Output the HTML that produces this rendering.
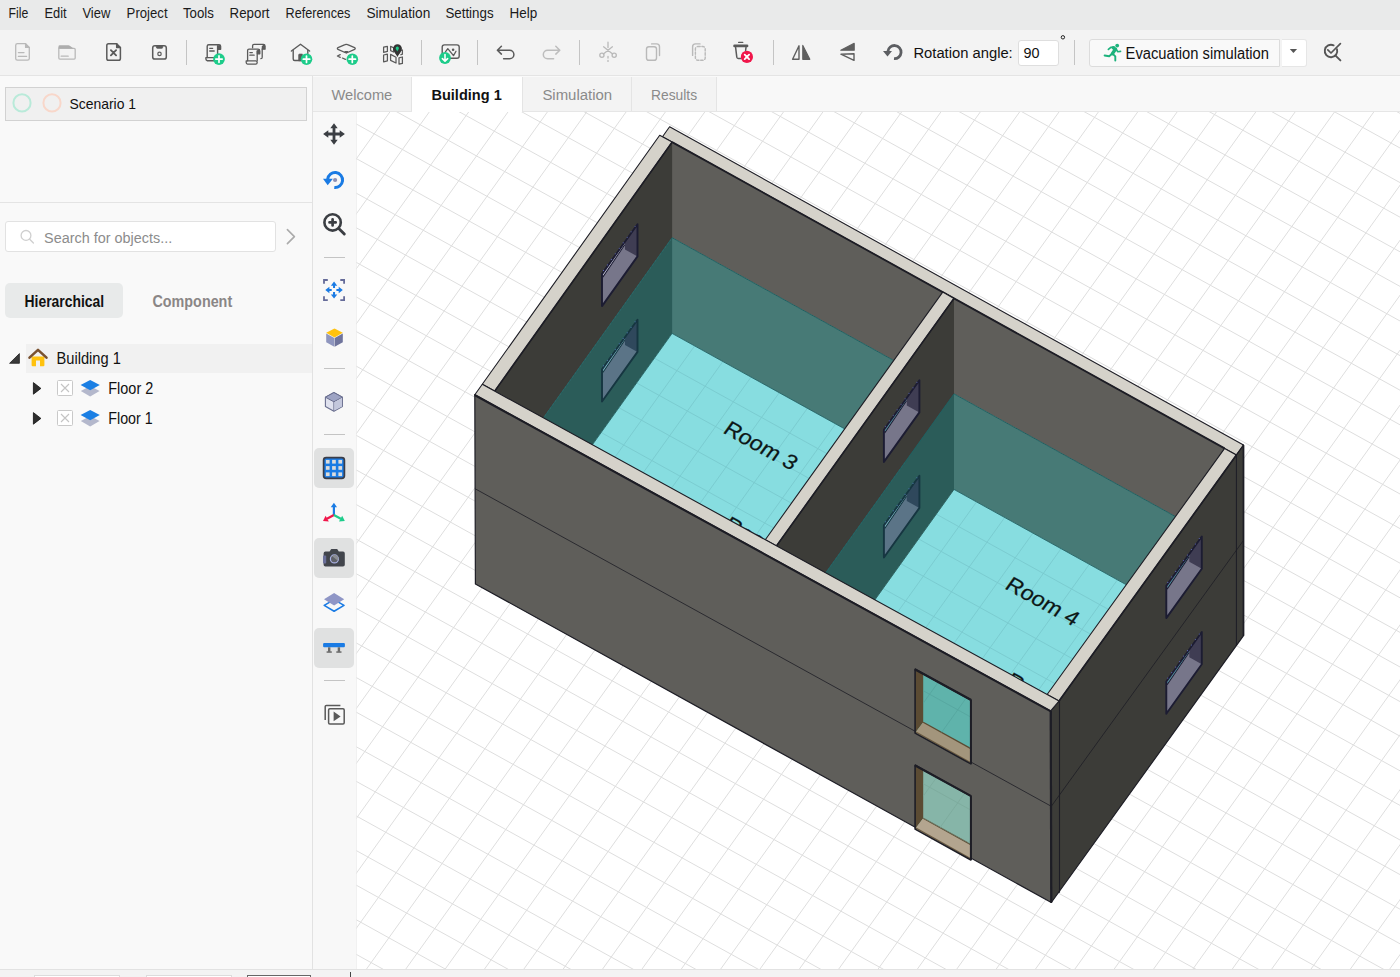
<!DOCTYPE html>
<html><head><meta charset="utf-8"><title>Building 1</title>
<style>
html,body{margin:0;padding:0;background:#f9f9f9;}
body{width:1400px;height:977px;position:relative;overflow:hidden;font-family:"Liberation Sans",sans-serif;}
.abs{position:absolute;box-sizing:border-box;}
#menubar{left:0;top:0;width:1400px;height:29.5px;background:#e9eaea;}
#toolbar{left:0;top:29.5px;width:1400px;height:46px;background:#f3f3f3;border-bottom:1px solid #e4e4e4;}
#left{left:0;top:75.5px;width:313px;height:894px;background:#f9f9f9;border-right:1px solid #e2e2e2;}
#scn{left:5px;top:87px;width:302px;height:34px;background:#f0f0f0;border:1px solid #d2d2d2;}
#hdiv{left:0;top:202px;width:312px;height:1px;background:#e4e4e4;}
#search{left:5px;top:221px;width:271px;height:31px;background:#fff;border:1px solid #e2e2e2;border-radius:3px;}
#pill{left:5px;top:283px;width:118px;height:35px;background:#e8eaea;border-radius:5px;}
#rowsel{left:26px;top:343.5px;width:286px;height:29px;background:#f1f1f1;}
#tabbar{left:313px;top:76.5px;width:1087px;height:35px;background:#f8f8f8;border-bottom:1px solid #e6e6e6;}
.tab{top:76.5px;height:34.5px;background:#f3f3f3;border-right:1px solid #e4e4e4;}
#vtb{left:313px;top:111.5px;width:43.5px;height:858px;background:#f8f8f8;border-right:1px solid #ececec;}
.vsel{left:314px;width:40px;background:#e0e1e1;border-radius:5px;}
.vsep{left:324px;width:21px;height:1px;background:#c4c4c4;}
#status{left:0;top:969px;width:1400px;height:8px;background:#f3f3f3;border-top:1px solid #e2e2e2;}
.sb{top:974.5px;height:4px;background:#fff;border:1px solid #dcdcdc;border-bottom:none;}
svg text{font-family:"Liberation Sans",sans-serif;}
</style></head><body>
<div class="abs" id="menubar"></div>
<div class="abs" id="toolbar"></div>
<div class="abs" id="left"></div>
<div class="abs" id="scn"></div>
<div class="abs" id="hdiv"></div>
<div class="abs" id="search"></div>
<div class="abs" id="pill"></div>
<div class="abs" id="rowsel"></div>
<div class="abs" id="tabbar"></div>
<div class="abs tab" style="left:313px;width:99px"></div>
<div class="abs tab" style="left:412px;width:110.5px;background:#fff;height:35.5px"></div>
<div class="abs tab" style="left:522.5px;width:109.5px"></div>
<div class="abs tab" style="left:632px;width:85px"></div>
<div class="abs" id="vtb"></div>
<div class="abs vsel" style="top:448px;height:40px"></div>
<div class="abs vsel" style="top:538px;height:40px"></div>
<div class="abs vsel" style="top:628px;height:40px"></div>
<div class="abs vsep" style="top:257px"></div>
<div class="abs vsep" style="top:368px"></div>
<div class="abs vsep" style="top:433.5px"></div>
<div class="abs vsep" style="top:680px"></div>
<div class="abs" id="status"></div>
<div class="abs sb" style="left:34px;width:86px"></div>
<div class="abs sb" style="left:146px;width:86px"></div>
<div class="abs sb" style="left:247px;width:64px;border-color:#666;top:975px"></div>
<div class="abs" style="left:350px;top:972px;width:1px;height:5px;background:#444"></div>
<!-- toolbar widgets -->
<div class="abs" style="left:186px;top:40px;width:1px;height:25px;background:#c4c4c4"></div>
<div class="abs" style="left:420.5px;top:40px;width:1px;height:25px;background:#c4c4c4"></div>
<div class="abs" style="left:476.5px;top:40px;width:1px;height:25px;background:#c4c4c4"></div>
<div class="abs" style="left:578.5px;top:40px;width:1px;height:25px;background:#c4c4c4"></div>
<div class="abs" style="left:772.5px;top:40px;width:1px;height:25px;background:#c4c4c4"></div>
<div class="abs" style="left:1074px;top:40px;width:1px;height:25px;background:#c4c4c4"></div>
<div class="abs" style="left:1018px;top:39.5px;width:41px;height:26.5px;background:#fff;border:1px solid #dedede;border-radius:3px"></div>
<div class="abs" style="left:1088.5px;top:38.5px;width:191px;height:28px;background:#f9f9f9;border:1px solid #dcdcdc;border-radius:3px 0 0 3px"></div>
<div class="abs" style="left:1281.5px;top:38.5px;width:25.5px;height:28px;background:#fff;border:1px solid #e6e6e6;border-left:none;border-radius:0 3px 3px 0"></div>
<svg class="abs" style="left:0;top:0" width="1400" height="977" viewBox="0 0 1400 977">
<defs><clipPath id="vp"><rect x="356.5" y="112" width="1043.5" height="857"/></clipPath>
<clipPath id="fl"><polygon points="672.1,333.4 942.7,483.1 765.3,730.9 494.7,581.2"/><polygon points="954.0,489.4 1224.6,639.1 1047.1,886.9 776.5,737.2"/></clipPath></defs>
<g clip-path="url(#vp)">
<rect x="356.5" y="112" width="1043.5" height="857" fill="#ffffff"/>
<path d="M391.3 110.0L354.5 161.4M430.7 110.0L354.5 216.4M470.1 110.0L354.5 271.3M509.4 110.0L354.5 326.3M548.8 110.0L354.5 381.3M588.1 110.0L354.5 436.2M627.5 110.0L354.5 491.2M666.8 110.0L354.5 546.1M706.2 110.0L354.5 601.1M745.5 110.0L354.5 656.0M784.9 110.0L354.5 711.0M824.3 110.0L354.5 765.9M863.6 110.0L354.5 820.9M903.0 110.0L354.5 875.8M942.3 110.0L354.5 930.8M981.7 110.0L365.1 971.0M1021.0 110.0L404.4 971.0M1060.4 110.0L443.8 971.0M1099.8 110.0L483.1 971.0M1139.1 110.0L522.5 971.0M1178.5 110.0L561.8 971.0M1217.8 110.0L601.2 971.0M1257.2 110.0L640.6 971.0M1296.5 110.0L679.9 971.0M1335.9 110.0L719.3 971.0M1375.2 110.0L758.6 971.0M1402.0 127.6L798.0 971.0M1402.0 182.5L837.3 971.0M1402.0 237.5L876.7 971.0M1402.0 292.5L916.0 971.0M1402.0 347.4L955.4 971.0M1402.0 402.4L994.8 971.0M1402.0 457.3L1034.1 971.0M1402.0 512.3L1073.5 971.0M1402.0 567.2L1112.8 971.0M1402.0 622.2L1152.2 971.0M1402.0 677.1L1191.5 971.0M1402.0 732.1L1230.9 971.0M1402.0 787.0L1270.3 971.0M1402.0 842.0L1309.6 971.0M1402.0 896.9L1349.0 971.0M1402.0 951.9L1388.3 971.0M1393.9 110.0L1402.0 114.5M1331.3 110.0L1402.0 149.1M1268.8 110.0L1402.0 183.7M1206.3 110.0L1402.0 218.3M1143.8 110.0L1402.0 252.9M1081.2 110.0L1402.0 287.5M1018.7 110.0L1402.0 322.1M956.2 110.0L1402.0 356.7M893.7 110.0L1402.0 391.3M831.1 110.0L1402.0 425.9M768.6 110.0L1402.0 460.5M706.1 110.0L1402.0 495.1M643.6 110.0L1402.0 529.7M581.0 110.0L1402.0 564.3M518.5 110.0L1402.0 598.9M456.0 110.0L1402.0 633.5M393.5 110.0L1402.0 668.1M354.5 123.0L1402.0 702.7M354.5 157.6L1402.0 737.3M354.5 192.2L1402.0 771.9M354.5 226.8L1402.0 806.5M354.5 261.4L1402.0 841.1M354.5 296.0L1402.0 875.7M354.5 330.6L1402.0 910.3M354.5 365.2L1402.0 944.9M354.5 399.8L1386.7 971.0M354.5 434.4L1324.1 971.0M354.5 469.0L1261.6 971.0M354.5 503.6L1199.1 971.0M354.5 538.2L1136.6 971.0M354.5 572.8L1074.0 971.0M354.5 607.4L1011.5 971.0M354.5 642.0L949.0 971.0M354.5 676.6L886.5 971.0M354.5 711.2L823.9 971.0M354.5 745.8L761.4 971.0M354.5 780.4L698.9 971.0M354.5 815.0L636.4 971.0M354.5 849.6L573.8 971.0M354.5 884.2L511.3 971.0M354.5 918.8L448.8 971.0M354.5 953.4L386.3 971.0" stroke="#dedede" stroke-width="1.0" fill="none"/>
<polygon points="669.6,126.8 1243.5,445.1 1236.4,455.0 662.5,136.8" fill="#d5d2ca" stroke="#1d1d25" stroke-width="1.1" stroke-linejoin="round"/>
<polygon points="671.0,141.4 1224.6,448.4 1224.6,543.8 671.0,237.1" fill="#5f5e5a"/>
<polygon points="671.0,237.1 1224.6,543.8 1224.6,639.1 671.0,332.8" fill="#477a76"/>
<line x1="672.1" y1="237.7" x2="1224.6" y2="543.8" stroke="#1f5f60" stroke-width="1"/>
<line x1="672.1" y1="142.1" x2="1224.6" y2="448.4" stroke="#1d1d25" stroke-width="1.8"/>
<polygon points="672.1,142.1 494.7,391.1 494.7,486.1 672.1,237.7" fill="#3c3c38"/>
<polygon points="672.1,237.7 494.7,486.1 494.7,581.2 672.1,333.4" fill="#2b5c59"/>
<line x1="672.1" y1="237.7" x2="494.7" y2="486.1" stroke="#1f5f60" stroke-width="1"/>
<polygon points="659.7,135.2 672.1,142.1 494.7,391.1 482.3,384.3" fill="#d5d2ca" stroke="#1d1d25" stroke-width="1.1" stroke-linejoin="round"/>
<line x1="672.1" y1="142.1" x2="494.7" y2="391.1" stroke="#1d1d25" stroke-width="1.6"/>
<polygon points="672.1,333.4 942.7,483.1 765.3,730.9 494.7,581.2" fill="#87dde0"/>
<polygon points="954.0,489.4 1224.6,639.1 1047.1,886.9 776.5,737.2" fill="#87dde0"/>
<path d="M391.3 110.0L354.5 161.4M430.7 110.0L354.5 216.4M470.1 110.0L354.5 271.3M509.4 110.0L354.5 326.3M548.8 110.0L354.5 381.3M588.1 110.0L354.5 436.2M627.5 110.0L354.5 491.2M666.8 110.0L354.5 546.1M706.2 110.0L354.5 601.1M745.5 110.0L354.5 656.0M784.9 110.0L354.5 711.0M824.3 110.0L354.5 765.9M863.6 110.0L354.5 820.9M903.0 110.0L354.5 875.8M942.3 110.0L354.5 930.8M981.7 110.0L365.1 971.0M1021.0 110.0L404.4 971.0M1060.4 110.0L443.8 971.0M1099.8 110.0L483.1 971.0M1139.1 110.0L522.5 971.0M1178.5 110.0L561.8 971.0M1217.8 110.0L601.2 971.0M1257.2 110.0L640.6 971.0M1296.5 110.0L679.9 971.0M1335.9 110.0L719.3 971.0M1375.2 110.0L758.6 971.0M1402.0 127.6L798.0 971.0M1402.0 182.5L837.3 971.0M1402.0 237.5L876.7 971.0M1402.0 292.5L916.0 971.0M1402.0 347.4L955.4 971.0M1402.0 402.4L994.8 971.0M1402.0 457.3L1034.1 971.0M1402.0 512.3L1073.5 971.0M1402.0 567.2L1112.8 971.0M1402.0 622.2L1152.2 971.0M1402.0 677.1L1191.5 971.0M1402.0 732.1L1230.9 971.0M1402.0 787.0L1270.3 971.0M1402.0 842.0L1309.6 971.0M1402.0 896.9L1349.0 971.0M1402.0 951.9L1388.3 971.0M1393.9 110.0L1402.0 114.5M1331.3 110.0L1402.0 149.1M1268.8 110.0L1402.0 183.7M1206.3 110.0L1402.0 218.3M1143.8 110.0L1402.0 252.9M1081.2 110.0L1402.0 287.5M1018.7 110.0L1402.0 322.1M956.2 110.0L1402.0 356.7M893.7 110.0L1402.0 391.3M831.1 110.0L1402.0 425.9M768.6 110.0L1402.0 460.5M706.1 110.0L1402.0 495.1M643.6 110.0L1402.0 529.7M581.0 110.0L1402.0 564.3M518.5 110.0L1402.0 598.9M456.0 110.0L1402.0 633.5M393.5 110.0L1402.0 668.1M354.5 123.0L1402.0 702.7M354.5 157.6L1402.0 737.3M354.5 192.2L1402.0 771.9M354.5 226.8L1402.0 806.5M354.5 261.4L1402.0 841.1M354.5 296.0L1402.0 875.7M354.5 330.6L1402.0 910.3M354.5 365.2L1402.0 944.9M354.5 399.8L1386.7 971.0M354.5 434.4L1324.1 971.0M354.5 469.0L1261.6 971.0M354.5 503.6L1199.1 971.0M354.5 538.2L1136.6 971.0M354.5 572.8L1074.0 971.0M354.5 607.4L1011.5 971.0M354.5 642.0L949.0 971.0M354.5 676.6L886.5 971.0M354.5 711.2L823.9 971.0M354.5 745.8L761.4 971.0M354.5 780.4L698.9 971.0M354.5 815.0L636.4 971.0M354.5 849.6L573.8 971.0M354.5 884.2L511.3 971.0M354.5 918.8L448.8 971.0M354.5 953.4L386.3 971.0" stroke="#79c9ce" stroke-width="0.9" fill="none" clip-path="url(#fl)"/>
<line x1="672.1" y1="333.4" x2="942.7" y2="483.1" stroke="#1f5f60" stroke-width="0.9"/>
<line x1="954.0" y1="489.4" x2="1224.6" y2="639.1" stroke="#1f5f60" stroke-width="0.9"/>
<line x1="672.1" y1="333.4" x2="494.7" y2="581.2" stroke="#1f5f60" stroke-width="0.9"/>
<line x1="954.0" y1="489.4" x2="776.5" y2="737.2" stroke="#1f5f60" stroke-width="0.9"/>
<text transform="matrix(28.186 15.597 -17.746 24.779 721.97 527.73)" font-family="Liberation Sans, sans-serif" font-size="0.705" fill="#0c1616" stroke="#0c1616" stroke-width="0.008">Room 1</text>
<text transform="matrix(28.186 15.597 -17.746 24.779 1003.83 683.70)" font-family="Liberation Sans, sans-serif" font-size="0.705" fill="#0c1616" stroke="#0c1616" stroke-width="0.008">Room 2</text>
<text transform="matrix(28.186 15.597 -17.746 24.779 721.97 432.27)" font-family="Liberation Sans, sans-serif" font-size="0.705" fill="#0c1616" stroke="#0c1616" stroke-width="0.008">Room 3</text>
<text transform="matrix(28.186 15.597 -17.746 24.779 1003.83 588.04)" font-family="Liberation Sans, sans-serif" font-size="0.705" fill="#0c1616" stroke="#0c1616" stroke-width="0.008">Room 4</text>
<polygon points="602.0,273.9 637.5,224.2 637.5,256.4 602.0,306.1" fill="#77768a"/>
<polygon points="637.5,224.2 637.5,256.4 625.0,249.4 625.0,241.7" fill="#3f3d53"/>
<line x1="602.8" y1="277.1" x2="624.7" y2="244.7" stroke="#1c1c32" stroke-width="1.1"/>
<line x1="602.8" y1="275.5" x2="624.7" y2="243.2" stroke="#c9cbe0" stroke-width="0.8"/>
<polygon points="602.0,273.9 637.5,224.2 637.5,256.4 602.0,306.1" fill="none" stroke="#1c1c32" stroke-width="1.9" stroke-linejoin="round"/>
<circle cx="603.5" cy="270.4" r="0.55" fill="#5f68b8"/>
<circle cx="607.4" cy="264.9" r="0.55" fill="#5f68b8"/>
<circle cx="611.4" cy="259.4" r="0.55" fill="#5f68b8"/>
<circle cx="615.3" cy="253.8" r="0.55" fill="#5f68b8"/>
<circle cx="619.3" cy="248.3" r="0.55" fill="#5f68b8"/>
<circle cx="623.2" cy="242.8" r="0.55" fill="#5f68b8"/>
<circle cx="627.2" cy="237.3" r="0.55" fill="#5f68b8"/>
<circle cx="631.1" cy="231.8" r="0.55" fill="#5f68b8"/>
<circle cx="635.1" cy="226.2" r="0.55" fill="#5f68b8"/>
<polygon points="602.0,369.3 637.5,319.7 637.5,351.9 602.0,401.5" fill="#5b7487"/>
<polygon points="637.5,319.7 637.5,351.9 625.0,345.0 625.0,337.2" fill="#2f485c"/>
<line x1="602.8" y1="372.5" x2="624.7" y2="340.2" stroke="#163641" stroke-width="1.1"/>
<line x1="602.8" y1="370.9" x2="624.7" y2="338.7" stroke="#7fc4cf" stroke-width="0.8"/>
<polygon points="602.0,369.3 637.5,319.7 637.5,351.9 602.0,401.5" fill="none" stroke="#163641" stroke-width="1.9" stroke-linejoin="round"/>
<circle cx="603.5" cy="365.8" r="0.55" fill="#5580c0"/>
<circle cx="607.4" cy="360.3" r="0.55" fill="#5580c0"/>
<circle cx="611.4" cy="354.8" r="0.55" fill="#5580c0"/>
<circle cx="615.3" cy="349.3" r="0.55" fill="#5580c0"/>
<circle cx="619.3" cy="343.8" r="0.55" fill="#5580c0"/>
<circle cx="623.2" cy="338.3" r="0.55" fill="#5580c0"/>
<circle cx="627.2" cy="332.8" r="0.55" fill="#5580c0"/>
<circle cx="631.1" cy="327.3" r="0.55" fill="#5580c0"/>
<circle cx="635.1" cy="321.8" r="0.55" fill="#5580c0"/>
<polygon points="954.0,298.4 776.5,545.9 776.5,641.5 954.0,393.9" fill="#3c3c38"/>
<polygon points="954.0,393.9 776.5,641.5 776.5,737.2 954.0,489.4" fill="#2b5c59"/>
<line x1="954.0" y1="393.9" x2="776.5" y2="641.5" stroke="#1f5f60" stroke-width="1"/>
<polygon points="942.7,292.1 954.0,298.4 776.5,545.9 765.3,539.7" fill="#d5d2ca" stroke="#1d1d25" stroke-width="1.1" stroke-linejoin="round"/>
<line x1="954.0" y1="298.4" x2="776.5" y2="545.9" stroke="#1d1d25" stroke-width="1.6"/>
<polygon points="883.9,429.7 919.4,380.2 919.4,412.4 883.9,461.9" fill="#77768a"/>
<polygon points="919.4,380.2 919.4,412.4 906.8,405.4 906.8,397.7" fill="#3f3d53"/>
<line x1="884.7" y1="432.9" x2="906.5" y2="400.7" stroke="#1c1c32" stroke-width="1.1"/>
<line x1="884.7" y1="431.3" x2="906.5" y2="399.2" stroke="#3d9aa8" stroke-width="0.8"/>
<polygon points="883.9,429.7 919.4,380.2 919.4,412.4 883.9,461.9" fill="none" stroke="#1c1c32" stroke-width="1.9" stroke-linejoin="round"/>
<circle cx="885.4" cy="426.3" r="0.55" fill="#5f68b8"/>
<circle cx="889.3" cy="420.7" r="0.55" fill="#5f68b8"/>
<circle cx="893.3" cy="415.2" r="0.55" fill="#5f68b8"/>
<circle cx="897.2" cy="409.7" r="0.55" fill="#5f68b8"/>
<circle cx="901.1" cy="404.2" r="0.55" fill="#5f68b8"/>
<circle cx="905.1" cy="398.7" r="0.55" fill="#5f68b8"/>
<circle cx="909.0" cy="393.2" r="0.55" fill="#5f68b8"/>
<circle cx="913.0" cy="387.7" r="0.55" fill="#5f68b8"/>
<circle cx="916.9" cy="382.2" r="0.55" fill="#5f68b8"/>
<polygon points="883.9,525.3 919.4,475.7 919.4,507.9 883.9,557.5" fill="#5b7487"/>
<polygon points="919.4,475.7 919.4,507.9 906.8,501.0 906.8,493.2" fill="#2f485c"/>
<line x1="884.7" y1="528.5" x2="906.5" y2="496.2" stroke="#163641" stroke-width="1.1"/>
<line x1="884.7" y1="526.9" x2="906.5" y2="494.7" stroke="#7fc4cf" stroke-width="0.8"/>
<polygon points="883.9,525.3 919.4,475.7 919.4,507.9 883.9,557.5" fill="none" stroke="#163641" stroke-width="1.9" stroke-linejoin="round"/>
<circle cx="885.4" cy="521.8" r="0.55" fill="#5580c0"/>
<circle cx="889.3" cy="516.3" r="0.55" fill="#5580c0"/>
<circle cx="893.3" cy="510.8" r="0.55" fill="#5580c0"/>
<circle cx="897.2" cy="505.3" r="0.55" fill="#5580c0"/>
<circle cx="901.1" cy="499.8" r="0.55" fill="#5580c0"/>
<circle cx="905.1" cy="494.3" r="0.55" fill="#5580c0"/>
<circle cx="909.0" cy="488.8" r="0.55" fill="#5580c0"/>
<circle cx="913.0" cy="483.3" r="0.55" fill="#5580c0"/>
<circle cx="916.9" cy="477.8" r="0.55" fill="#5580c0"/>
<polygon points="1243.5,445.1 1059.0,701.0 1050.7,710.9 1051.3,902.5 1243.5,635.7" fill="#3c3c38" stroke="#1d1d25" stroke-width="1.2" stroke-linejoin="round"/>
<polygon points="1224.6,448.4 1236.4,455.0 1059.0,701.0 1047.1,694.5" fill="#d5d2ca" stroke="#1d1d25" stroke-width="1.1" stroke-linejoin="round"/>
<line x1="1236.4" y1="455.0" x2="1059.0" y2="701.0" stroke="#1d1d25" stroke-width="1.6"/>
<line x1="1236.4" y1="455.0" x2="1236.4" y2="645.7" stroke="#1d1d25" stroke-width="1.0"/>
<line x1="1059.5" y1="700.3" x2="1059.5" y2="892.7" stroke="#1d1d25" stroke-width="1.1"/>
<line x1="1243.5" y1="445.1" x2="1243.5" y2="635.7" stroke="#1d1d25" stroke-width="1.6"/>
<line x1="1243.5" y1="540.4" x2="1051.3" y2="806.3" stroke="#1d1d25" stroke-width="0.8"/>
<polygon points="1166.3,585.9 1201.8,536.5 1201.8,568.7 1166.3,618.1" fill="#77768a"/>
<polygon points="1201.8,536.5 1201.8,568.7 1189.3,561.7 1189.3,553.9" fill="#3f3d53"/>
<line x1="1167.1" y1="589.1" x2="1189.0" y2="556.9" stroke="#1c1c32" stroke-width="1.1"/>
<line x1="1167.1" y1="587.5" x2="1189.0" y2="555.4" stroke="#3d9aa8" stroke-width="0.8"/>
<polygon points="1166.3,585.9 1201.8,536.5 1201.8,568.7 1166.3,618.1" fill="none" stroke="#1c1c32" stroke-width="1.9" stroke-linejoin="round"/>
<circle cx="1167.8" cy="582.4" r="0.55" fill="#5f68b8"/>
<circle cx="1171.7" cy="576.9" r="0.55" fill="#5f68b8"/>
<circle cx="1175.7" cy="571.4" r="0.55" fill="#5f68b8"/>
<circle cx="1179.6" cy="566.0" r="0.55" fill="#5f68b8"/>
<circle cx="1183.6" cy="560.5" r="0.55" fill="#5f68b8"/>
<circle cx="1187.5" cy="555.0" r="0.55" fill="#5f68b8"/>
<circle cx="1191.5" cy="549.5" r="0.55" fill="#5f68b8"/>
<circle cx="1195.4" cy="544.0" r="0.55" fill="#5f68b8"/>
<circle cx="1199.3" cy="538.5" r="0.55" fill="#5f68b8"/>
<polygon points="1166.3,681.5 1201.8,632.0 1201.8,664.2 1166.3,713.7" fill="#77768a"/>
<polygon points="1201.8,632.0 1201.8,664.2 1189.3,657.2 1189.3,649.5" fill="#3f3d53"/>
<line x1="1167.1" y1="684.7" x2="1189.0" y2="652.5" stroke="#1c1c32" stroke-width="1.1"/>
<line x1="1167.1" y1="683.1" x2="1189.0" y2="651.0" stroke="#3d9aa8" stroke-width="0.8"/>
<polygon points="1166.3,681.5 1201.8,632.0 1201.8,664.2 1166.3,713.7" fill="none" stroke="#1c1c32" stroke-width="1.9" stroke-linejoin="round"/>
<circle cx="1167.8" cy="678.1" r="0.55" fill="#5f68b8"/>
<circle cx="1171.7" cy="672.6" r="0.55" fill="#5f68b8"/>
<circle cx="1175.7" cy="667.1" r="0.55" fill="#5f68b8"/>
<circle cx="1179.6" cy="661.6" r="0.55" fill="#5f68b8"/>
<circle cx="1183.6" cy="656.1" r="0.55" fill="#5f68b8"/>
<circle cx="1187.5" cy="650.6" r="0.55" fill="#5f68b8"/>
<circle cx="1191.5" cy="645.0" r="0.55" fill="#5f68b8"/>
<circle cx="1195.4" cy="639.5" r="0.55" fill="#5f68b8"/>
<circle cx="1199.3" cy="634.0" r="0.55" fill="#5f68b8"/>
<polygon points="474.8,394.7 1050.7,710.9 1051.3,902.5 475.4,583.9" fill="#5f5e5a" stroke="#1d1d25" stroke-width="1.2" stroke-linejoin="round"/>
<polygon points="482.3,384.3 1059.0,701.0 1050.7,710.9 474.8,394.7" fill="#d5d2ca" stroke="#1d1d25" stroke-width="1.1" stroke-linejoin="round"/>
<line x1="474.6" y1="395.0" x2="1050.4" y2="711.2" stroke="#1d1d25" stroke-width="2.1"/>
<line x1="1050.7" y1="710.9" x2="1051.3" y2="902.5" stroke="#1d1d25" stroke-width="2.2"/>
<line x1="475.4" y1="488.9" x2="1051.3" y2="806.3" stroke="#1d1d25" stroke-width="0.8"/>
<polygon points="915.1,669.2 970.9,700.0 970.9,763.9 915.1,733.1" fill="#5fb3ab"/>
<polygon points="915.1,669.2 923.2,673.7 923.2,722.2 915.1,733.1" fill="#5b4b33"/>
<polygon points="915.1,733.1 923.2,722.2 970.9,748.6 970.9,763.9" fill="#a3957c"/>
<line x1="923.2" y1="722.2" x2="970.9" y2="748.6" stroke="#5b4b33" stroke-width="1.3"/>
<line x1="915.9" y1="731.9" x2="970.9" y2="762.7" stroke="#6a5a40" stroke-width="1.2"/>
<clipPath id="dg1"><polygon points="923.2,673.7 970.9,700.0 970.9,748.6 923.2,722.2"/></clipPath>
<g clip-path="url(#dg1)"><g transform="translate(0 -93.0)"><path d="M391.3 110.0L354.5 161.4M430.7 110.0L354.5 216.4M470.1 110.0L354.5 271.3M509.4 110.0L354.5 326.3M548.8 110.0L354.5 381.3M588.1 110.0L354.5 436.2M627.5 110.0L354.5 491.2M666.8 110.0L354.5 546.1M706.2 110.0L354.5 601.1M745.5 110.0L354.5 656.0M784.9 110.0L354.5 711.0M824.3 110.0L354.5 765.9M863.6 110.0L354.5 820.9M903.0 110.0L354.5 875.8M942.3 110.0L354.5 930.8M981.7 110.0L365.1 971.0M1021.0 110.0L404.4 971.0M1060.4 110.0L443.8 971.0M1099.8 110.0L483.1 971.0M1139.1 110.0L522.5 971.0M1178.5 110.0L561.8 971.0M1217.8 110.0L601.2 971.0M1257.2 110.0L640.6 971.0M1296.5 110.0L679.9 971.0M1335.9 110.0L719.3 971.0M1375.2 110.0L758.6 971.0M1402.0 127.6L798.0 971.0M1402.0 182.5L837.3 971.0M1402.0 237.5L876.7 971.0M1402.0 292.5L916.0 971.0M1402.0 347.4L955.4 971.0M1402.0 402.4L994.8 971.0M1402.0 457.3L1034.1 971.0M1402.0 512.3L1073.5 971.0M1402.0 567.2L1112.8 971.0M1402.0 622.2L1152.2 971.0M1402.0 677.1L1191.5 971.0M1402.0 732.1L1230.9 971.0M1402.0 787.0L1270.3 971.0M1402.0 842.0L1309.6 971.0M1402.0 896.9L1349.0 971.0M1402.0 951.9L1388.3 971.0M1393.9 110.0L1402.0 114.5M1331.3 110.0L1402.0 149.1M1268.8 110.0L1402.0 183.7M1206.3 110.0L1402.0 218.3M1143.8 110.0L1402.0 252.9M1081.2 110.0L1402.0 287.5M1018.7 110.0L1402.0 322.1M956.2 110.0L1402.0 356.7M893.7 110.0L1402.0 391.3M831.1 110.0L1402.0 425.9M768.6 110.0L1402.0 460.5M706.1 110.0L1402.0 495.1M643.6 110.0L1402.0 529.7M581.0 110.0L1402.0 564.3M518.5 110.0L1402.0 598.9M456.0 110.0L1402.0 633.5M393.5 110.0L1402.0 668.1M354.5 123.0L1402.0 702.7M354.5 157.6L1402.0 737.3M354.5 192.2L1402.0 771.9M354.5 226.8L1402.0 806.5M354.5 261.4L1402.0 841.1M354.5 296.0L1402.0 875.7M354.5 330.6L1402.0 910.3M354.5 365.2L1402.0 944.9M354.5 399.8L1386.7 971.0M354.5 434.4L1324.1 971.0M354.5 469.0L1261.6 971.0M354.5 503.6L1199.1 971.0M354.5 538.2L1136.6 971.0M354.5 572.8L1074.0 971.0M354.5 607.4L1011.5 971.0M354.5 642.0L949.0 971.0M354.5 676.6L886.5 971.0M354.5 711.2L823.9 971.0M354.5 745.8L761.4 971.0M354.5 780.4L698.9 971.0M354.5 815.0L636.4 971.0M354.5 849.6L573.8 971.0M354.5 884.2L511.3 971.0M354.5 918.8L448.8 971.0M354.5 953.4L386.3 971.0" stroke="#55a59e" stroke-width="0.8" fill="none"/></g></g>
<polygon points="915.1,669.2 970.9,700.0 970.9,763.9 915.1,733.1" fill="none" stroke="#1d1d25" stroke-width="1.6" stroke-linejoin="round"/>
<line x1="914.8" y1="669.2" x2="971.2" y2="700.0" stroke="#1d1d25" stroke-width="2.2"/>
<line x1="970.9" y1="700.0" x2="970.9" y2="763.9" stroke="#1d1d25" stroke-width="2.0"/>
<polygon points="915.1,765.2 970.9,796.1 970.9,860.0 915.1,829.1" fill="#86b5a8"/>
<polygon points="915.1,765.2 923.2,769.7 923.2,818.2 915.1,829.1" fill="#5b4b33"/>
<polygon points="915.1,829.1 923.2,818.2 970.9,844.6 970.9,860.0" fill="#b3a58f"/>
<line x1="923.2" y1="818.2" x2="970.9" y2="844.6" stroke="#5b4b33" stroke-width="1.3"/>
<line x1="915.9" y1="827.9" x2="970.9" y2="858.8" stroke="#6a5a40" stroke-width="1.2"/>
<clipPath id="dg0"><polygon points="923.2,769.7 970.9,796.1 970.9,844.6 923.2,818.2"/></clipPath>
<g clip-path="url(#dg0)"><g transform="translate(0 0.0)"><path d="M391.3 110.0L354.5 161.4M430.7 110.0L354.5 216.4M470.1 110.0L354.5 271.3M509.4 110.0L354.5 326.3M548.8 110.0L354.5 381.3M588.1 110.0L354.5 436.2M627.5 110.0L354.5 491.2M666.8 110.0L354.5 546.1M706.2 110.0L354.5 601.1M745.5 110.0L354.5 656.0M784.9 110.0L354.5 711.0M824.3 110.0L354.5 765.9M863.6 110.0L354.5 820.9M903.0 110.0L354.5 875.8M942.3 110.0L354.5 930.8M981.7 110.0L365.1 971.0M1021.0 110.0L404.4 971.0M1060.4 110.0L443.8 971.0M1099.8 110.0L483.1 971.0M1139.1 110.0L522.5 971.0M1178.5 110.0L561.8 971.0M1217.8 110.0L601.2 971.0M1257.2 110.0L640.6 971.0M1296.5 110.0L679.9 971.0M1335.9 110.0L719.3 971.0M1375.2 110.0L758.6 971.0M1402.0 127.6L798.0 971.0M1402.0 182.5L837.3 971.0M1402.0 237.5L876.7 971.0M1402.0 292.5L916.0 971.0M1402.0 347.4L955.4 971.0M1402.0 402.4L994.8 971.0M1402.0 457.3L1034.1 971.0M1402.0 512.3L1073.5 971.0M1402.0 567.2L1112.8 971.0M1402.0 622.2L1152.2 971.0M1402.0 677.1L1191.5 971.0M1402.0 732.1L1230.9 971.0M1402.0 787.0L1270.3 971.0M1402.0 842.0L1309.6 971.0M1402.0 896.9L1349.0 971.0M1402.0 951.9L1388.3 971.0M1393.9 110.0L1402.0 114.5M1331.3 110.0L1402.0 149.1M1268.8 110.0L1402.0 183.7M1206.3 110.0L1402.0 218.3M1143.8 110.0L1402.0 252.9M1081.2 110.0L1402.0 287.5M1018.7 110.0L1402.0 322.1M956.2 110.0L1402.0 356.7M893.7 110.0L1402.0 391.3M831.1 110.0L1402.0 425.9M768.6 110.0L1402.0 460.5M706.1 110.0L1402.0 495.1M643.6 110.0L1402.0 529.7M581.0 110.0L1402.0 564.3M518.5 110.0L1402.0 598.9M456.0 110.0L1402.0 633.5M393.5 110.0L1402.0 668.1M354.5 123.0L1402.0 702.7M354.5 157.6L1402.0 737.3M354.5 192.2L1402.0 771.9M354.5 226.8L1402.0 806.5M354.5 261.4L1402.0 841.1M354.5 296.0L1402.0 875.7M354.5 330.6L1402.0 910.3M354.5 365.2L1402.0 944.9M354.5 399.8L1386.7 971.0M354.5 434.4L1324.1 971.0M354.5 469.0L1261.6 971.0M354.5 503.6L1199.1 971.0M354.5 538.2L1136.6 971.0M354.5 572.8L1074.0 971.0M354.5 607.4L1011.5 971.0M354.5 642.0L949.0 971.0M354.5 676.6L886.5 971.0M354.5 711.2L823.9 971.0M354.5 745.8L761.4 971.0M354.5 780.4L698.9 971.0M354.5 815.0L636.4 971.0M354.5 849.6L573.8 971.0M354.5 884.2L511.3 971.0M354.5 918.8L448.8 971.0M354.5 953.4L386.3 971.0" stroke="#7ca99c" stroke-width="0.8" fill="none"/></g></g>
<polygon points="915.1,765.2 970.9,796.1 970.9,860.0 915.1,829.1" fill="none" stroke="#1d1d25" stroke-width="1.6" stroke-linejoin="round"/>
<line x1="914.8" y1="765.2" x2="971.2" y2="796.1" stroke="#1d1d25" stroke-width="2.2"/>
<line x1="970.9" y1="796.1" x2="970.9" y2="860.0" stroke="#1d1d25" stroke-width="2.0"/>
</g>
<g id="uitext">
<text transform="translate(8.60 18.20) scale(0.8471 1)" font-size="14.5" fill="#1b1b1b">File</text>
<text transform="translate(44.40 18.20) scale(0.8880 1)" font-size="14.5" fill="#1b1b1b">Edit</text>
<text transform="translate(82.40 18.20) scale(0.8988 1)" font-size="14.5" fill="#1b1b1b">View</text>
<text transform="translate(126.60 18.20) scale(0.9086 1)" font-size="14.5" fill="#1b1b1b">Project</text>
<text transform="translate(183.00 18.20) scale(0.9151 1)" font-size="14.5" fill="#1b1b1b">Tools</text>
<text transform="translate(229.60 18.20) scale(0.9195 1)" font-size="14.5" fill="#1b1b1b">Report</text>
<text transform="translate(285.60 18.20) scale(0.8742 1)" font-size="14.5" fill="#1b1b1b">References</text>
<text transform="translate(366.40 18.20) scale(0.9446 1)" font-size="14.5" fill="#1b1b1b">Simulation</text>
<text transform="translate(445.40 18.20) scale(0.9203 1)" font-size="14.5" fill="#1b1b1b">Settings</text>
<text transform="translate(509.60 18.20) scale(0.9305 1)" font-size="14.5" fill="#1b1b1b">Help</text>
<text transform="translate(69.40 108.60) scale(0.9296 1)" font-size="15" fill="#111">Scenario 1</text>
<text transform="translate(331.50 100.00) scale(0.9581 1)" font-size="15.3" fill="#8a8a8a">Welcome</text>
<text transform="translate(431.40 100.00) scale(0.9519 1)" font-size="15.3" fill="#111" font-weight="bold">Building 1</text>
<text transform="translate(542.40 100.00) scale(0.9768 1)" font-size="15.3" fill="#8a8a8a">Simulation</text>
<text transform="translate(651.00 100.00) scale(0.9042 1)" font-size="15.3" fill="#8a8a8a">Results</text>
<text transform="translate(44.10 243.00) scale(0.9423 1)" font-size="15.3" fill="#8c8c8c">Search for objects...</text>
<text transform="translate(24.50 306.60) scale(0.8821 1)" font-size="15.8" fill="#111" font-weight="bold">Hierarchical</text>
<text transform="translate(152.50 306.60) scale(0.9086 1)" font-size="15.8" fill="#8a8686" font-weight="bold">Component</text>
<text transform="translate(56.50 364.30) scale(0.9288 1)" font-size="15.8" fill="#111">Building 1</text>
<text transform="translate(108.30 394.00) scale(0.9143 1)" font-size="15.8" fill="#111">Floor 2</text>
<text transform="translate(108.30 423.80) scale(0.9041 1)" font-size="15.8" fill="#111">Floor 1</text>
<text transform="translate(913.40 57.60) scale(0.9596 1)" font-size="15.4" fill="#111">Rotation angle:</text>
<text transform="translate(1023.40 58.20) scale(0.9343 1)" font-size="15.4" fill="#111">90</text>
<text transform="translate(1125.60 59.00) scale(0.9331 1)" font-size="15.8" fill="#111">Evacuation simulation</text>
</g>
<g id="icons">
<!-- toolbar icons -->
<g fill="none" stroke="#b9b9b9" stroke-width="1.3" stroke-linejoin="round" stroke-linecap="round">
 <!-- new file -->
 <path d="M17.4 43.7H25.6L29.3 47.4V58.4Q29.3 60.2 27.5 60.2H17.4Q15.7 60.2 15.7 58.4V45.5Q15.7 43.7 17.4 43.7Z"/>
 <path d="M25.6 43.7V47.4H29.3" fill="#b9b9b9"/>
 <path d="M18.4 52.6H24M18.4 56.4H26.6"/>
 <!-- folder -->
 <path d="M58.8 48V58.1Q58.8 59.2 59.9 59.2H74.1Q75.2 59.2 75.2 58.1V49.4Q75.2 48.3 74.1 48.3H58.8Z"/>
 <path d="M58.5 48.5V46.6Q58.5 45.3 59.8 45.3H68.6Q69.3 45.3 69.8 45.7L73.6 48.5Z" fill="#adadad" stroke="none"/>
 <path d="M61.2 56.2H68.2"/>
</g>
<g fill="none" stroke="#5a5a5a" stroke-width="1.5" stroke-linejoin="round" stroke-linecap="round">
 <!-- close file -->
 <path d="M108.5 43.8H116.7L120.4 47.5V58.4Q120.4 60.2 118.6 60.2H108.5Q106.8 60.2 106.8 58.4V45.6Q106.8 43.8 108.5 43.8Z"/>
 <path d="M116.7 43.8V47.5H120.4" fill="#5a5a5a"/>
 <path d="M110.9 50.1L116.1 55.3M116.1 50.1L110.9 55.3" stroke-width="1.8"/>
 <!-- save -->
 <rect x="152.7" y="45.7" width="13.6" height="13.4" rx="2.2"/>
 <path d="M156.4 45.6H162.6V47.6Q162.6 48.3 161.9 48.3H157.1Q156.4 48.3 156.4 47.6Z" fill="#5a5a5a" stroke-width="0.8"/>
 <circle cx="159.5" cy="53.9" r="1.7" stroke-width="1.2"/>
</g>
<!-- scenario add -->
<g fill="none" stroke="#5a5a5a" stroke-width="1.4" stroke-linejoin="round" stroke-linecap="round">
 <path d="M207.2 57.6V46.2Q207.2 44.7 208.7 44.7H219Q220.6 44.7 220.6 46.3V49.3H217.8V46.3"/>
 <path d="M217.6 46V57.6" />
 <path d="M219.2 44.7Q220.7 44.9 220.7 46.5V49.3H218V46.3Q218 44.9 219.2 44.7Z" fill="#5a5a5a" stroke="none"/>
 <path d="M205.9 57.6H216Q217.6 57.8 217.6 59.3Q217.4 60.7 216 60.7H207.3Q205.9 60.5 205.9 59.1Z"/>
 <path d="M209.7 48.3H212.7" stroke-width="1.2"/><path d="M209.7 51H214.2" stroke-width="1.3"/>
</g>
<circle cx="219" cy="59.1" r="5.9" fill="#1dcc8a"/><path d="M219 55.9V62.3M215.8 59.1H222.2" stroke="#fff" stroke-width="1.7" stroke-linecap="round"/>
<!-- copy scenario -->
<g fill="none" stroke="#5a5a5a" stroke-width="1.3" stroke-linejoin="round" stroke-linecap="round">
 <path d="M252.6 47.8V45.8Q252.6 44.4 254 44.4H263.4Q265 44.4 265 46V49.2H262.4V46.4"/>
 <path d="M263.8 44.4Q265.2 44.6 265.2 46.2V49.2H262.4V46.4Q262.4 44.6 263.8 44.4Z" fill="#5a5a5a" stroke="none"/>
 <path d="M262.2 49V57.2Q262.2 58.7 260.9 58.7"/>
 <path d="M247.6 60.8V50.6Q247.6 49.2 249 49.2H258Q259.8 49.2 259.8 51V53.8H257.4V51"/>
 <path d="M258.6 49.2Q260 49.4 260 51V53.8H257.3V51Q257.3 49.4 258.6 49.2Z" fill="#5a5a5a" stroke="none"/>
 <path d="M257.2 51V60.8"/>
 <path d="M246.2 60.9H255.8Q257.2 61.1 257.2 62.6Q257 64.1 255.8 64.1H247.6Q246.2 63.9 246.2 62.5Z"/>
 <path d="M249.8 52.6H252.4" stroke-width="1.1"/><path d="M249.8 55.2H254.2" stroke-width="1.2"/>
</g>
<!-- home add -->
<g fill="none" stroke="#5a5a5a" stroke-width="1.4" stroke-linejoin="round" stroke-linecap="round">
 <path d="M291.4 51L300.5 44.3L309.6 51"/>
 <path d="M293.2 50.4V59Q293.2 60.5 294.7 60.5H301"/><path d="M307.8 50.4V53.4"/>
 <path d="M298.6 60.5V55Q298.6 54 299.6 54H302.4V60.5Z" fill="#5a5a5a" stroke-width="0.6"/>
</g>
<circle cx="306.5" cy="59.2" r="5.8" fill="#1dcc8a"/><path d="M306.5 56V62.4M303.3 59.2H309.7" stroke="#fff" stroke-width="1.7" stroke-linecap="round"/>
<!-- floor add -->
<g fill="none" stroke="#5a5a5a" stroke-width="1.3" stroke-linejoin="round" stroke-linecap="round">
 <path d="M345 44.6Q346.3 44 347.6 44.6L354.6 47.6Q355.9 48.5 354.6 49.4L347.6 52.5Q346.3 53.1 345 52.5L338 49.4Q336.7 48.5 338 47.6Z"/>
 <path d="M345 51.6H347.6L346.3 52.8Z" fill="#5a5a5a"/>
 <path d="M340.2 54.6L337.4 56L340.2 57.4" stroke-width="1.2"/><path d="M342.4 58L345.4 59.4" stroke-width="1.2"/>
</g>
<circle cx="352.3" cy="59.2" r="5.8" fill="#1dcc8a"/><path d="M352.3 56V62.4M349.1 59.2H355.5" stroke="#fff" stroke-width="1.7" stroke-linecap="round"/>
<!-- map pin -->
<g fill="none" stroke="#5a5a5a" stroke-width="1.25" stroke-linejoin="round">
 <path d="M383.6 47.2L387.4 46.3V51.4L383.6 52.3Z"/><path d="M383.6 55L387.4 54.1V60.8L383.6 61.8Z"/>
 <path d="M390.6 46.4L393.6 47.8V52L390.6 50.6Z"/><path d="M390.6 54.4L396 57.2V63L390.6 60.4Z"/>
 <path d="M399 57.8L402.4 57V63.4L399 64.2Z"/><path d="M400.6 50.4L402.4 50V54.2L400.4 54.8"/>
</g>
<path d="M397.5 44.2A4.4 4.4 0 0 1 401.9 48.6C401.9 51.6 398.6 54.6 397.5 57C396.4 54.6 393.1 51.6 393.1 48.6A4.4 4.4 0 0 1 397.5 44.2Z" fill="#333"/>
<path d="M397.3 46.6A1.6 1.6 0 0 1 398.9 48.2C398.9 49.3 397.8 50.2 397.3 51.4C396.8 50.2 395.7 49.3 395.7 48.2A1.6 1.6 0 0 1 397.3 46.6Z" fill="#1dcc8a"/>
<!-- image import -->
<g fill="none" stroke="#5a5a5a" stroke-width="1.4" stroke-linejoin="round" stroke-linecap="round">
 <rect x="442.2" y="44.9" width="17" height="13.4" rx="2.2"/>
 <path d="M445.4 51.8L447.8 48.7L453.5 55.6L456 51.2" stroke-width="1.3"/>
 <circle cx="453.1" cy="49.8" r="0.6" fill="#5a5a5a"/>
</g>
<circle cx="445" cy="58" r="5.9" fill="#1dcc8a"/><path d="M445 54.6V61M442.4 58.6L445 61.2L447.6 58.6" fill="none" stroke="#fff" stroke-width="1.6" stroke-linecap="round" stroke-linejoin="round"/>
<!-- undo / redo -->
<path d="M501.4 46.3L497.4 50.2L501.4 54.1M497.6 50.2H509.6A4.3 4.3 0 0 1 509.6 58.8H503.6" fill="none" stroke="#5a5a5a" stroke-width="1.5" stroke-linecap="round" stroke-linejoin="round"/>
<path d="M555.8 46.3L559.8 50.2L555.8 54.1M559.6 50.2H547.6A4.3 4.3 0 0 0 547.6 58.8H553.6" fill="none" stroke="#bdbdbd" stroke-width="1.5" stroke-linecap="round" stroke-linejoin="round"/>
<!-- cut -->
<g fill="none" stroke="#b9b9b9" stroke-width="1.3" stroke-linecap="round">
 <path d="M608 42.2V47.6M608 56.4V58M608 60.4V61.4"/>
 <path d="M603.6 46.8L612.6 54M612.4 46.8L603.4 54"/>
 <circle cx="601.9" cy="55.2" r="2.1"/><circle cx="614.2" cy="55.2" r="2.1"/>
</g>
<!-- copy -->
<g fill="none" stroke="#b9b9b9" stroke-width="1.4" stroke-linecap="round" stroke-linejoin="round">
 <rect x="646.5" y="46.7" width="10" height="13.6" rx="2.4"/>
 <path d="M651.6 43.9H656.6Q659.5 43.9 659.5 46.8V55.6"/>
</g>
<!-- paste -->
<g fill="none" stroke="#b9b9b9" stroke-width="1.4" stroke-linecap="round" stroke-linejoin="round">
 <rect x="695.4" y="46.5" width="9.8" height="13.8" rx="2.4" stroke-dasharray="2.4 1.7"/>
 <path d="M692.6 55.4V46.8Q692.6 43.9 695.5 43.9H700"/>
</g>
<!-- delete -->
<g fill="none" stroke="#5a5a5a" stroke-linecap="round" stroke-linejoin="round">
 <path d="M738.6 42.4H742.8" stroke-width="1.2"/>
 <path d="M734.6 45.9H747" stroke-width="2.8"/>
 <path d="M735.6 47.4L736.8 57.2Q737 58.4 738.2 58.4H741" stroke-width="1.5"/><path d="M746 47.4L745.6 50.4" stroke-width="1.5"/>
</g>
<circle cx="746.9" cy="56.9" r="6.1" fill="#f0164a"/><path d="M744.7 54.7L749.1 59.1M749.1 54.7L744.7 59.1" stroke="#fff" stroke-width="1.8" stroke-linecap="round"/>
<!-- mirror h / v -->
<path d="M799 45.8V59.2H792.6Z" fill="none" stroke="#5f5f5f" stroke-width="1.4" stroke-linejoin="round"/>
<path d="M802.8 45.4L809.8 59.3H802.8Z" fill="#5f5f5f" stroke="#5f5f5f" stroke-width="1.2" stroke-linejoin="round"/>
<path d="M854.2 43.4V50.2H840.8Z" fill="#5f5f5f" stroke="#5f5f5f" stroke-width="1.2" stroke-linejoin="round"/>
<path d="M854 53.8V60.4L840.9 54.2Z" fill="none" stroke="#5f5f5f" stroke-width="1.4" stroke-linejoin="round"/>
<!-- rotate ccw -->
<path d="M894 58.7A6.6 6.6 0 1 0 887.9 51.5" fill="none" stroke="#5c5e62" stroke-width="2.8"/>
<path d="M883 50.9H892L887.5 56.6Z" fill="#5c5e62"/>
<!-- degree -->
<circle cx="1062.9" cy="37.3" r="1.7" fill="none" stroke="#222" stroke-width="1"/>
<!-- runner -->
<g fill="none" stroke="#1cb27c" stroke-linecap="round" stroke-linejoin="round">
 <circle cx="1117.2" cy="45.6" r="1.9" fill="#1cb27c" stroke="none"/>
 <path d="M1113.4 47.9L1115.4 49.2L1112.4 53.6" stroke-width="3.4"/>
 <path d="M1108.4 49.4L1110.8 47.4L1114.2 47.2" stroke-width="1.7"/>
 <path d="M1116 48.6L1117.6 51.7L1120.6 51.4" stroke-width="1.6"/>
 <path d="M1111.8 54L1109.2 56.3L1104.6 55.5" stroke-width="1.9"/>
 <path d="M1112.8 53.8L1115.3 56.4V60.6" stroke-width="1.9"/>
</g>
<!-- dropdown arrow -->
<path d="M1289.8 49.1H1297.1L1293.45 52.9Z" fill="#555"/>
<!-- check search -->
<g fill="none" stroke="#555" stroke-width="1.9" stroke-linecap="round" stroke-linejoin="round">
 <path d="M1333.6 45.3A6.25 6.25 0 1 0 1337 49.2"/>
 <path d="M1327.8 49.9L1331 53L1340.4 43.6" stroke-width="1.7"/>
 <path d="M1335.8 55.8L1340.4 60.4"/>
</g>

<!-- left panel icons -->
<circle cx="22" cy="102.9" r="8.6" fill="none" stroke="#b9ead9" stroke-width="2"/>
<circle cx="52" cy="102.9" r="8.6" fill="none" stroke="#f8d7ca" stroke-width="2"/>
<g fill="none" stroke="#cfcfcf" stroke-width="1.3" stroke-linecap="round"><circle cx="26" cy="235.4" r="4.9"/><path d="M29.7 239.2L33.4 243"/></g>
<path d="M287.4 229.6L294.4 236.6L287.4 243.6" fill="none" stroke="#ababab" stroke-width="1.6" stroke-linecap="round" stroke-linejoin="round"/>
<!-- tree -->
<path d="M19.4 353.6V363.3H9.6Z" fill="#3a3a3a" stroke="#222" stroke-width="0.8" stroke-linejoin="round"/>
<path d="M33.4 382.6L40.9 388.4L33.4 394.2Z" fill="#2e2e2e" stroke="#111" stroke-width="0.8" stroke-linejoin="round"/>
<path d="M33.4 412.6L40.9 418.4L33.4 424.2Z" fill="#2e2e2e" stroke="#111" stroke-width="0.8" stroke-linejoin="round"/>
<!-- house -->
<path d="M31.6 356.6H44.4V365.2Q44.4 366.3 43.3 366.3H40V360.6H36V366.3H32.7Q31.6 366.3 31.6 365.2Z" fill="#ffc20e"/>
<path d="M29.5 357.6L38 349.9L46.5 357.6" fill="none" stroke="#7a5230" stroke-width="2.6" stroke-linecap="round" stroke-linejoin="round"/>
<!-- checkboxes -->
<g fill="#fff" stroke="#c9c9c9" stroke-width="1"><rect x="57.5" y="380.5" width="15" height="15" rx="1"/><rect x="57.5" y="410.5" width="15" height="15" rx="1"/></g>
<path d="M61 384L69 392M69 384L61 392M61 414L69 422M69 414L61 422" stroke="#c4c4c4" stroke-width="1.1" fill="none"/>
<!-- layers icon -->
<g id="lay"><path d="M90.2 386L99.6 391L90.2 396.4L80.8 391Z" fill="#b4b8cc"/><path d="M90.2 380L99.8 385L90.2 390.2L80.6 385Z" fill="#1a7fe4"/></g>
<use href="#lay" y="30"/>
<!-- vertical toolbar icons -->
<!-- move -->
<g fill="#3b3e43" stroke="none">
 <path d="M334 123.2L337.7 128.3H335.4V132.6H339.7V130.3L344.9 134L339.7 137.7V135.4H335.4V139.7H337.7L334 144.8L330.3 139.7H332.6V135.4H328.3V137.7L323.1 134L328.3 130.3V132.6H332.6V128.3H330.3Z"/>
</g>
<!-- rotate blue -->
<path d="M334.3 187.4A7.45 7.45 0 1 0 327.7 179.2" fill="none" stroke="#1a7be4" stroke-width="3"/>
<path d="M323 178.7H332.9L327.7 185.2Z" fill="#1a7be4"/>
<circle cx="335.1" cy="180" r="2.1" fill="#8c8fb4"/>
<!-- zoom -->
<g fill="none" stroke="#3b3e43" stroke-linecap="round"><circle cx="332.6" cy="222.4" r="8.2" stroke-width="2.6"/><path d="M339 228.8L344.3 234" stroke-width="2.9"/><path d="M332.6 219.3V225.5M329.5 222.4H335.7" stroke-width="2.7"/></g>
<!-- fit -->
<g fill="none" stroke="#656b99" stroke-width="1.8"><path d="M327.8 280H324V283.8M340.3 280H344.1V283.8M324 296.3V300.1H327.8M344.1 296.3V300.1H340.3"/></g>
<g fill="#1a7be4"><path d="M334.05 281.6L337.25 285.7H335.05V288H333.05V285.7H330.85Z"/><path d="M334.05 298.5L337.25 294.4H335.05V292.1H333.05V294.4H330.85Z"/><path d="M325.3 290.05L329.4 286.85V289.05H331.7V291.05H329.4V293.25Z"/><path d="M342.8 290.05L338.7 286.85V289.05H336.4V291.05H338.7V293.25Z"/></g>
<!-- cube yellow -->
<path d="M334.5 328.4L342.8 332.8L334.5 337.4L326.2 332.8Z" fill="#ffc20e"/>
<path d="M326.2 333.4L334.3 337.9V346.8L326.2 342.2Z" fill="#8f96be"/>
<path d="M342.8 333.4L334.7 337.9V346.8L342.8 342.2Z" fill="#6f749c"/>
<!-- cube wire -->
<path d="M333.9 392.6L342.4 397.2V406.6L333.9 411.2L325.4 406.6V397.2Z" fill="#dfe1ee" stroke="#6a6f8f" stroke-width="1.1" stroke-linejoin="round"/>
<path d="M333.9 392.6L342.4 397.2L333.9 401.8L325.4 397.2Z" fill="#9ea4c4" stroke="#6a6f8f" stroke-width="1" stroke-linejoin="round"/>
<path d="M333.9 401.8V411.2" stroke="#6a6f8f" stroke-width="1"/>
<path d="M334.4 402.2L342 398V406.4L334.4 410.6Z" fill="#c3c7dc"/>
<!-- grid -->
<rect x="323.6" y="457.6" width="20.8" height="20.8" rx="2.6" fill="#1a7be4" stroke="#3a3d48" stroke-width="1.7"/>
<g fill="#dcdcdc"><rect x="325.9" y="459.9" width="3.7" height="3.7"/><rect x="332.1" y="459.9" width="3.7" height="3.7"/><rect x="338.4" y="459.9" width="3.7" height="3.7"/>
<rect x="325.9" y="466.1" width="3.7" height="3.7"/><rect x="332.1" y="466.1" width="3.7" height="3.7"/><rect x="338.4" y="466.1" width="3.7" height="3.7"/>
<rect x="325.9" y="472.4" width="3.7" height="3.7"/><rect x="332.1" y="472.4" width="3.7" height="3.7"/><rect x="338.4" y="472.4" width="3.7" height="3.7"/></g>
<!-- axes -->
<path d="M333.9 515V506.6" stroke="#1a7be4" stroke-width="2.2"/><path d="M330.8 507.2L333.9 502.8L337 507.2Z" fill="#1a7be4"/>
<path d="M333.9 515L327 518.8" stroke="#f0164a" stroke-width="2.2"/><path d="M325.6 515.8L323 521L328.8 521.4Z" fill="#f0164a"/>
<path d="M333.9 515L340.8 518.8" stroke="#1dcc8a" stroke-width="2.2"/><path d="M342.2 515.8L344.8 521L339 521.4Z" fill="#1dcc8a"/>
<!-- camera -->
<path d="M329.6 551.6L331 549.2Q331.2 548.9 331.6 548.9H336.8Q337.2 548.9 337.4 549.2L338.8 551.6H343Q344.8 551.6 344.8 553.4V564.8Q344.8 566.6 343 566.6H325.4Q323.6 566.6 323.6 564.8V553.4Q323.6 551.6 325.4 551.6Z" fill="#42454c"/>
<rect x="323" y="555.6" width="3.2" height="8" rx="0.8" fill="#6a6f99"/>
<circle cx="334.4" cy="558.9" r="4" fill="#5f6168" stroke="#aab1e4" stroke-width="1.2"/>
<path d="M332.2 556.2A3.4 3.4 0 0 1 337.6 560.6Z" fill="#8b8d93"/>
<!-- layers -->
<path d="M334.1 599.6L344 605.4L334.1 611.2L324.2 605.4Z" fill="none" stroke="#1a7be4" stroke-width="1.6" stroke-linejoin="round"/>
<path d="M334.1 593L344.2 599.2L334.1 605.4L324 599.2Z" fill="#8f96c6"/>
<!-- table -->
<rect x="323.1" y="643.1" width="21.8" height="4.2" rx="1" fill="#1a7be4"/>
<g fill="#6b6b6b"><rect x="328" y="647.3" width="2.4" height="4.6"/><rect x="326.6" y="651.3" width="5.2" height="1.5"/><rect x="337.7" y="647.3" width="2.4" height="4.6"/><rect x="336.3" y="651.3" width="5.2" height="1.5"/></g>
<!-- play -->
<g fill="none" stroke="#5a5a5a" stroke-width="1.5" stroke-linejoin="round"><path d="M325.2 720V706.6Q325.2 705.4 326.4 705.4H340.4"/><rect x="328.6" y="708.8" width="15.6" height="15.2" rx="1.2"/></g>
<path d="M333.6 711.6L340.6 716.4L333.6 721.2Z" fill="#5a5a5a"/>

</g>
</svg>
</body></html>
